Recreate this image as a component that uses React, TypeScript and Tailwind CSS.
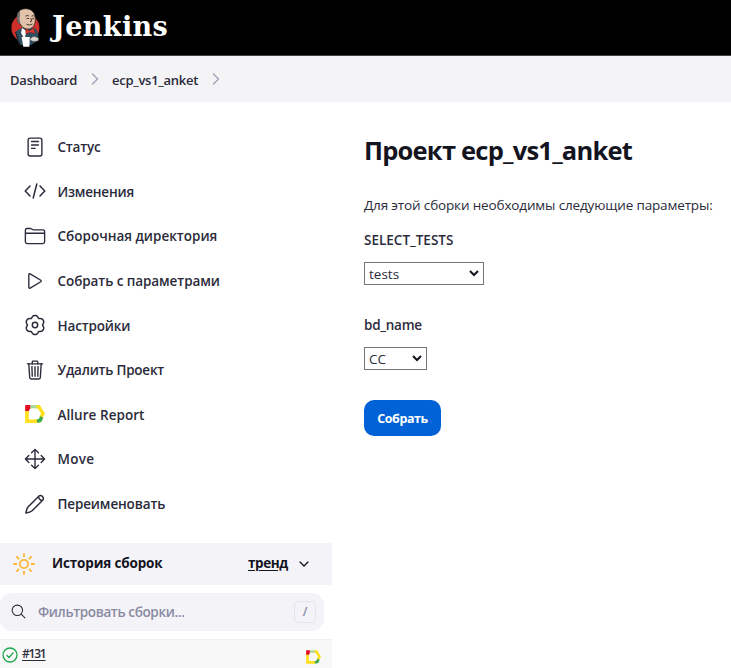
import type { ReactNode } from "react";
import {
  IoReaderOutline,
  IoFolderOutline,
  IoPlayOutline,
  IoTrashOutline,
  IoMoveOutline,
  IoSearchOutline,
  IoChevronDownOutline,
} from "react-icons/io5";

function ButlerLogo() {
  return (
    <svg viewBox="0 0 30 40" className="h-[40px] w-[30px]">
      <circle cx="14.400" cy="20" r="14" fill="#d0302b" />
      <path d="M4.500 24C6.500 21.500 10 20.500 12 19.500L23 20C26.500 21 27 25 27.500 28L26 33 20 37H9C7 34 5 29 4.500 24Z" fill="#2e4f60" />
      <path d="M4.500 24L9 37" stroke="#111" strokeWidth=".8" fill="none" />
      <path d="M6.500 9C5.800 4 9.500 .700 14.500 .700 20.500 .700 24.200 4.500 24.300 10.500 24.500 16 22.500 19.800 18.500 21 14.500 21.500 10.500 19.500 9.400 16 7.500 15.500 6 13.500 6.300 12Z" fill="#e0c3a8" stroke="#2a2522" strokeWidth=".8" />
      <path d="M6.500 12.500C5.200 8.500 6 4.500 9.200 2.700 8.600 6 9.200 8 8.500 10.800L9.500 16C8 15.500 7 14.500 6.500 12.500Z" fill="#6d6b6d" />
      <path d="M14.500 8.200Q16.500 6.700 18 8M20.500 8.200Q22.500 7 23.500 8.500M15.500 10.500H18M21 10.700H23M19.700 10L20.800 13.200 19 13.800M15.500 16.200Q18.500 18 21.500 16" fill="none" stroke="#3b2a20" strokeWidth=".9" />
      <path d="M11 20L15.500 23 13.500 31 10 25Z" fill="#fff" />
      <path d="M14.500 20.800L18.300 22.800 22.700 20.200 24 25.500 19 24.200 15 26Z" fill="#dc3a33" stroke="#81211c" strokeWidth=".5" />
      <path d="M10.600 29H18.800L18.400 38.800H12.300Z" fill="#fff" />
      <path d="M18.700 32Q20.500 28 23.500 28.500L27.800 30 27 33 22.500 33.500Z" fill="#ddd5d0" stroke="#444" strokeWidth=".5" />
    </svg>
  );
}

function AllureIcon({ className }: { className: string }) {
  return (
    <svg viewBox="0 0 20 18" className={className} fill="none">
      <path d="M5 1.700H13" stroke="#a9d69a" strokeWidth="3.200" />
      <path d="M11.500 1.700H13.800L18 8.500 15.800 12.500" stroke="#ffe01a" strokeWidth="3.400" />
      <path d="M2 5.500V16.200H12.500" stroke="#ffe01a" strokeWidth="3.600" />
      <path d="M16.800 12L15 15.500 12 16.300" stroke="#3faa4e" strokeWidth="3.600" />
      <path d="M.2 0H5.200V3.500L3.800 6H.2Z" fill="#e30b20" />
    </svg>
  );
}

function CodeIcon() {
  return (
    <svg viewBox="0 0 22 22" className="size-[22px]" fill="none" stroke="currentColor" strokeWidth="1.500" strokeLinecap="round" strokeLinejoin="round">
      <path d="M6 6L1.200 11 6 16M16 6L20.800 11 16 16M12.800 4L9.200 18" />
    </svg>
  );
}

// Outline of a gear with six soft lobes, one of them pointing straight up.
const gearPoints = Array.from({ length: 72 }, (_, i) => {
  const a = (i / 72) * Math.PI * 2;
  const r = 8.75 + 0.95 * Math.cos(6 * a) - 0.2 * Math.cos(12 * a);
  return `${(11 + r * Math.sin(a)).toFixed(2)},${(11 - r * Math.cos(a)).toFixed(2)}`;
}).join(" ");

function GearIcon() {
  return (
    <svg viewBox="0 0 22 22" className="size-[22px]" fill="none" stroke="currentColor" strokeWidth="1.500" strokeLinejoin="round">
      <polygon points={gearPoints} />
      <circle cx="11" cy="11" r="2.700" />
    </svg>
  );
}

function PencilIcon() {
  return (
    <svg viewBox="0 0 22 22" className="size-[22px]" fill="none" stroke="currentColor" strokeWidth="1.500" strokeLinecap="round" strokeLinejoin="round">
      <path d="M14.800 3.200L4.200 13.800C2.900 15.200 2.300 17.500 1.900 20 4.400 19.600 6.700 19 8.100 17.800L18.700 7.200A2.830 2.830 0 0 0 14.800 3.200C13.800 4.500 17 8.400 18.700 7.200" />
    </svg>
  );
}

function SunIcon() {
  return (
    <svg viewBox="0 0 22 22" className="size-[22px]" fill="none" stroke="#ffb733" strokeWidth="1.800" strokeLinecap="round">
      <circle cx="11" cy="11" r="4.100" />
      <path d="M11 1V3.400M11 18.600V21M1 11H3.400M18.600 11H21M3.900 3.900L5.600 5.600M16.400 16.400L18.100 18.100M3.900 18.100L5.600 16.400M16.400 5.600L18.100 3.900" />
    </svg>
  );
}

function Crumb({ className }: { className: string }) {
  return (
    <svg viewBox="0 0 8 12" className={`h-[12px] w-[8px] shrink-0 ${className}`} fill="none" stroke="#a5a5b8" strokeWidth="1.500" strokeLinecap="round" strokeLinejoin="round">
      <path d="M1.500 1L6.500 6 1.500 11" />
    </svg>
  );
}

const tasks: { label: string; icon: ReactNode; spacing: string }[] = [
  { label: "Статус", icon: <IoReaderOutline />, spacing: "tracking-[-0.200px]" },
  { label: "Изменения", icon: <CodeIcon />, spacing: "tracking-[-0.200px]" },
  { label: "Сборочная директория", icon: <IoFolderOutline />, spacing: "" },
  { label: "Собрать с параметрами", icon: <IoPlayOutline />, spacing: "tracking-[-0.080px]" },
  { label: "Настройки", icon: <GearIcon />, spacing: "tracking-[-0.150px]" },
  { label: "Удалить Проект", icon: <IoTrashOutline />, spacing: "tracking-[-0.230px]" },
  { label: "Allure Report", icon: <AllureIcon className="h-[18px] w-[20px]" />, spacing: "tracking-[0.050px]" },
  { label: "Move", icon: <IoMoveOutline />, spacing: "tracking-[0.250px]" },
  { label: "Переименовать", icon: <PencilIcon />, spacing: "tracking-[-0.140px]" },
];

function Select({ value, width }: { value: string; width: string }) {
  return (
    <div className={`flex h-[23px] items-center justify-between border border-[#767676] bg-white pr-[4px] pl-[4px] text-[13.500px] ${width}`}>
      <span className="mt-px">{value}</span>
      <svg viewBox="0 0 10 7" className="mb-px h-[7px] w-[10px]" fill="none" stroke="#14141f" strokeWidth="2">
        <path d="M1 1L5 5 9 1" />
      </svg>
    </div>
  );
}

export default function App() {
  return (
    <div className="h-[668px] w-[731px] overflow-hidden bg-white font-['Open_Sans','Noto_Sans',sans-serif] text-[13.500px] text-[#2b2b3b]">
      <header className="flex h-[56px] items-start border-b border-[#444] bg-black pt-[8px] pl-[11px]">
        <ButlerLogo />
        <span className="mt-px ml-[11px] font-['DejaVu_Serif',serif] text-[27px] leading-[36px] font-bold tracking-[0.400px] text-white">Jenkins</span>
      </header>
      <nav className="flex h-[46px] items-center bg-[#f4f4f7] pl-[10px] text-[13px] font-semibold">
        <span className="mt-[3px] w-[67px] tracking-[-0.200px] whitespace-nowrap">Dashboard</span>
        <Crumb className="ml-[14px]" />
        <span className="mt-[3px] ml-[13px] w-[86px] tracking-[-0.280px] whitespace-nowrap">ecp_vs1_anket</span>
        <Crumb className="ml-[14px]" />
      </nav>
      <div className="flex">
        <aside className="w-[332px] shrink-0 pt-[22.500px]">
          <ul className="h-[418.500px]">
            {tasks.map((t) => (
              <li key={t.label} className="flex h-[44.600px] items-center pl-[23.500px]">
                <span className="flex w-[22px] justify-center text-[22px]">{t.icon}</span>
                <span className={`mt-px ml-[12px] font-semibold whitespace-nowrap ${t.spacing}`}>{t.label}</span>
              </li>
            ))}
          </ul>
          <div className="flex h-[42px] items-center bg-[#f3f3f8] pl-[13px] font-bold text-[#14141f]">
            <SunIcon />
            <span className="mb-[2px] ml-[17px] flex-1 tracking-[-0.150px] whitespace-nowrap">История сборок</span>
            <span className="mb-[2px] w-[40px] tracking-[-0.400px] whitespace-nowrap underline underline-offset-2">тренд</span>
            <IoChevronDownOutline className="mr-[21px] ml-[9px] size-[14px]" />
          </div>
          <div className="mt-[8px] flex h-[38px] w-[324px] items-center rounded-[12px] bg-[#f3f3f8] pl-[10px] font-semibold text-[#8a8aa3]">
            <IoSearchOutline className="mb-px size-[17px] text-[#2b2b3b]" />
            <span className="ml-[11px] flex-1 tracking-[-0.370px] whitespace-nowrap">Фильтровать сборки...</span>
            <kbd className="mr-[8px] flex h-[22px] w-[22px] items-center justify-center rounded-[4px] border border-[#e4e4ec] font-['Open_Sans',sans-serif] text-[12px]">/</kbd>
          </div>
          <div className="mt-[8px] flex h-[30px] items-start border-t border-[#f0f0f2] bg-[#f8f8f8] pl-[2px]">
            <svg viewBox="0 0 16 16" className="mt-[7px] size-[16px]" fill="none" stroke="#1ea64b" strokeWidth="1.300" strokeLinecap="round" strokeLinejoin="round">
              <circle cx="8" cy="8" r="7" />
              <path d="M5 8.500L7 10.500 11 5.800" />
            </svg>
            <div className="mt-[4px] ml-[4px] flex-1 text-[12px] leading-[20px] font-semibold tracking-[-1.200px]">
              <span className="underline underline-offset-2">#131</span>
            </div>
            <AllureIcon className="mt-[10px] mr-[11px] h-[14px] w-[15px]" />
          </div>
        </aside>
        <main className="flex flex-col items-start pl-[32px] whitespace-nowrap">
          <h1 className="mt-[30px] text-[25.500px] leading-[36px] font-bold tracking-[-0.780px] text-[#14141f]">Проект ecp_vs1_anket</h1>
          <p className="mt-[27px] leading-[20px] tracking-[-0.150px]">Для этой сборки необходимы следующие параметры:</p>
          <div className="mt-[15px] mb-[12px] leading-[20px] font-semibold">SELECT_TESTS</div>
          <Select value="tests" width="w-[120px]" />
          <div className="mt-[30px] mb-[12px] leading-[20px] font-semibold tracking-[-0.250px]">bd_name</div>
          <Select value="CC" width="w-[63px]" />
          <button className="mt-[30px] h-[36px] w-[77px] rounded-[10px] bg-[#0062d6] pt-[3px] text-[12.500px] font-bold tracking-[-0.450px] text-white">Собрать</button>
        </main>
      </div>
    </div>
  );
}
